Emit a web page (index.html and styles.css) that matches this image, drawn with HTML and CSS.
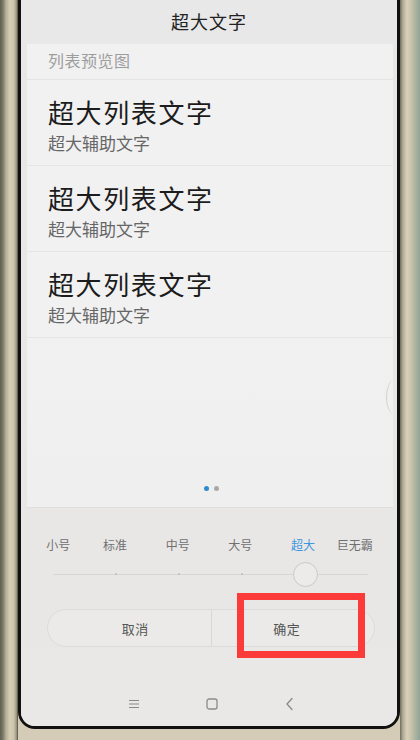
FILE: index.html
```html
<!DOCTYPE html>
<html lang="zh-CN">
<head>
<meta charset="utf-8">
<title>超大文字</title>
<link rel="stylesheet" href="styles.css">
</head>
<body>
<div class="phone">
  <div class="bezel bezel-left"></div>
  <div class="screen">
    <header class="titlebar">超大文字</header>

    <section class="preview">
      <div class="preview-head">列表预览图</div>
      <ul class="preview-list">
        <li class="row">
          <div class="row-title">超大列表文字</div>
          <div class="row-sub">超大辅助文字</div>
        </li>
        <li class="row">
          <div class="row-title">超大列表文字</div>
          <div class="row-sub">超大辅助文字</div>
        </li>
        <li class="row">
          <div class="row-title">超大列表文字</div>
          <div class="row-sub">超大辅助文字</div>
        </li>
      </ul>
      <div class="pager">
        <span class="dot dot-active"></span>
        <span class="dot"></span>
      </div>
      <span class="scroll-handle"></span>
    </section>

    <div class="sizes">
      <span class="size size-first">小号</span>
      <span class="size">标准</span>
      <span class="size">中号</span>
      <span class="size">大号</span>
      <span class="size size-active">超大</span>
      <span class="size size-last">巨无霸</span>
    </div>

    <div class="slider">
      <div class="track">
        <span class="tick" style="left:20%"></span>
        <span class="tick" style="left:40%"></span>
        <span class="tick" style="left:60%"></span>
        <span class="thumb" style="left:80%"></span>
      </div>
    </div>

    <div class="actions">
      <button class="action">取消</button>
      <button class="action action-ok">确定</button>
      <span class="highlight"></span>
    </div>

    <nav class="navbar">
      <svg class="nav-icon" width="14" height="12" viewBox="0 0 14 12">
        <path d="M2 2.5h10M2 6h10M2 9.5h10" stroke="#8a8a8a" stroke-width="1.2" fill="none"/>
      </svg>
      <svg class="nav-icon" width="14" height="14" viewBox="0 0 14 14">
        <rect x="2" y="2" width="10" height="10" rx="2" stroke="#8a8a8a" stroke-width="1.3" fill="none"/>
      </svg>
      <svg class="nav-icon" width="14" height="14" viewBox="0 0 14 14">
        <path d="M9 1.5L4 7l5 5.5" stroke="#8a8a8a" stroke-width="1.3" fill="none" stroke-linecap="round" stroke-linejoin="round"/>
      </svg>
    </nav>
  </div>
  <div class="bezel bezel-right"></div>
</div>
</body>
</html>
```

FILE: styles.css
```css
* {
  box-sizing: border-box;
}

html, body {
  margin: 0;
  padding: 0;
}

body {
  width: 420px;
  height: 740px;
  overflow: hidden;
  font-family: "Noto Sans CJK SC", "Noto Sans", sans-serif;
  background: #d4ccb6;
}

.phone {
  display: flex;
  width: 420px;
  height: 740px;
}

/* metal frame on both sides of the display */
.bezel {
  height: 740px;
  flex: none;
}

.bezel-left {
  width: 18px;
  background: linear-gradient(90deg, #5e5f52 0, #7c7b6a 3px, #b8af95 6px, #d6cfb8 10px, #cbc3aa 14px, #8f8a76 17px, #3a3a34 18px);
}

.bezel-right {
  width: 20px;
  background: linear-gradient(90deg, #6f6d60 0, #b4ad96 3px, #d8d1bb 7px, #c9c3ab 11px, #aeb4a0 15px, #8fa59a 20px);
}

/* display */
.screen {
  width: 382px;
  height: 729px;
  flex: none;
  display: flex;
  flex-direction: column;
  background: #e8e7e6;
  border: 3px solid #111;
  border-top: none;
  border-radius: 0 0 17px 17px;
  overflow: hidden;
}

.titlebar {
  height: 44px;
  flex: none;
  display: flex;
  align-items: center;
  justify-content: center;
  padding-bottom: 2px;
  font-size: 18px;
  color: #222;
  letter-spacing: 1px;
  background: #e8e8e9;
}

/* list preview card */
.preview {
  position: relative;
  height: 464px;
  flex: none;
  margin: 0 4px 0 6px;
  display: flex;
  flex-direction: column;
  background: linear-gradient(180deg, #f1f1f2 0, #f2f1f2 60%, #efefef 100%);
  border-bottom: 1px solid #dedede;
}

.preview-head {
  height: 36px;
  padding: 6px 0 0 21px;
  font-size: 16px;
  line-height: 20px;
  color: #9d9d9d;
  letter-spacing: 0.5px;
  border-bottom: 1px solid #e4e4e4;
}

.preview-list {
  list-style: none;
  margin: 0;
  padding: 0;
}

.row {
  height: 86px;
  padding: 16px 0 0 21px;
  border-bottom: 1px solid #e6e6e6;
}

.row-title {
  font-size: 26px;
  line-height: 32px;
  color: #1c1c1c;
  letter-spacing: 1.6px;
}

.row-sub {
  margin-top: 3px;
  font-size: 17px;
  line-height: 24px;
  color: #666;
}

.pager {
  margin-top: auto;
  padding-bottom: 16px;
  display: flex;
  justify-content: center;
  gap: 5px;
  padding-left: 3px;
}

.dot {
  width: 5px;
  height: 5px;
  border-radius: 50%;
  background: #a9a9a9;
}

.dot-active {
  background: #2f8bd0;
}

/* edge handle of the card */
.scroll-handle {
  position: absolute;
  right: -1px;
  top: 336px;
  width: 8px;
  height: 34px;
  border-radius: 8px 0 0 8px / 17px 0 0 17px;
  border-left: 1.5px solid #cfcfcf;
}

/* font size selector */
.sizes {
  margin-top: 29px;
  display: grid;
  grid-template-columns: repeat(6, 1fr);
  font-size: 12px;
  line-height: 16px;
  color: #707070;
}

.size {
  text-align: center;
}

.size-first {
  padding-left: 12px;
}

.size-last {
  padding-right: 22px;
}

.size-active {
  color: #3b97de;
}

.slider {
  height: 30px;
  margin-top: 6px;
  padding: 0 29px 0 32px;
  display: flex;
  align-items: center;
}

.track {
  position: relative;
  flex: 1;
  height: 1px;
  background: #d6d6d6;
}

.tick {
  position: absolute;
  top: -1px;
  width: 2px;
  height: 2px;
  margin-left: -1px;
  background: #bdbdbd;
  border-radius: 50%;
}

.thumb {
  position: absolute;
  top: -12px;
  width: 25px;
  height: 25px;
  margin-left: -12px;
  border-radius: 50%;
  background: #ecebea;
  border: 1.5px solid #c9c9c9;
}

/* cancel / confirm pill */
.actions {
  position: relative;
  height: 38px;
  margin: 20px 22px 0 26px;
  display: flex;
  border: 1px solid #dcdbd9;
  border-radius: 19px;
  background: #ebeae8;
}

.action {
  flex: 1;
  border: none;
  background: none;
  padding: 0 0 0 12px;
  font-family: inherit;
  font-size: 13px;
  color: #555;
  letter-spacing: 0.5px;
}

.action-ok {
  padding: 0 12px 0 0;
  border-left: 1px solid #d8d7d5;
}

.highlight {
  position: absolute;
  left: 189px;
  top: -17px;
  width: 128px;
  height: 65px;
  border: 7px solid #fc3a3a;
}

/* navigation keys */
.navbar {
  flex: 1;
  display: flex;
  align-items: center;
  justify-content: center;
  gap: 64px;
  padding: 34px 0 0 6px;
  background: #e9e8e6;
}

.nav-icon {
  display: block;
}
```
